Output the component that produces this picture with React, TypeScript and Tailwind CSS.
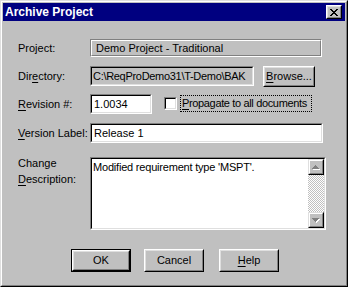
import { FC, ReactNode } from "react";

const raisedOuter =
  "border border-t-white border-l-white border-r-black border-b-black";
const raisedInner =
  "border border-t-[#dfdfdf] border-l-[#dfdfdf] border-r-[#808080] border-b-[#808080]";
const sunkenOuter =
  "border border-t-[#808080] border-l-[#808080] border-r-white border-b-white";
const sunkenInner =
  "border border-t-black border-l-black border-r-[#dfdfdf] border-b-[#dfdfdf]";

const Button: FC<{ children: ReactNode; isDefault?: boolean; className?: string }> = ({
  children,
  isDefault,
  className = "",
}) => {
  const body = (
    <div className={`${raisedOuter} h-full w-full bg-[#c0c0c0]`}>
      <div className={`${raisedInner} h-full w-full flex items-center justify-center`}>
        {children}
      </div>
    </div>
  );
  return isDefault ? (
    <div className={`border border-black ${className}`}>{body}</div>
  ) : (
    <div className={className}>{body}</div>
  );
};

const Sunken: FC<{ children?: ReactNode; className?: string; inner?: string }> = ({
  children,
  className = "",
  inner = "bg-white",
}) => (
  <div className={`${sunkenOuter} ${className}`}>
    <div className={`${sunkenInner} h-full w-full ${inner}`}>{children}</div>
  </div>
);

const Label: FC<{ children: ReactNode }> = ({ children }) => (
  <div className="w-[72px] shrink-0 h-[20px] leading-[20px] whitespace-nowrap">{children}</div>
);

const U: FC<{ children: ReactNode }> = ({ children }) => (
  <span className="underline underline-offset-[2px]">{children}</span>
);

const CloseGlyph = () => (
  <svg width="8" height="7" viewBox="0 0 8 7" shapeRendering="crispEdges" className="shrink-0">
    <path
      fill="#000"
      d="M0 0h2v1H0zM6 0h2v1H6zM1 1h2v1H1zM5 1h2v1H5zM2 2h4v1H2zM3 3h2v1H3zM2 4h4v1H2zM1 5h2v1H1zM5 5h2v1H5zM0 6h2v1H0zM6 6h2v1H6z"
    />
  </svg>
);

const ArrowGlyph: FC<{ down?: boolean }> = ({ down }) => (
  <svg width="8" height="5" viewBox="0 0 8 5" shapeRendering="crispEdges">
    {down ? (
      <>
        <path fill="#fff" d="M1 1h7v1H1zM2 2h5v1H2zM3 3h3v1H3zM4 4h1v1H4z" />
        <path fill="#808080" d="M0 0h7v1H0zM1 1h5v1H1zM2 2h3v1H2zM3 3h1v1H3z" />
      </>
    ) : (
      <>
        <path fill="#fff" d="M4 1h1v1H4zM3 2h3v1H3zM2 3h5v1H2zM1 4h7v1H1z" />
        <path fill="#808080" d="M3 0h1v1H3zM2 1h3v1H2zM1 2h5v1H1zM0 3h7v1H0z" />
      </>
    )}
  </svg>
);

const ScrollButton: FC<{ down?: boolean }> = ({ down }) => (
  <div className="w-[16px] h-[16px] border border-t-[#dfdfdf] border-l-[#dfdfdf] border-r-black border-b-black">
    <div className="h-full w-full border border-t-white border-l-white border-r-[#808080] border-b-[#808080] bg-[#c0c0c0] flex items-center justify-center">
      <ArrowGlyph down={down} />
    </div>
  </div>
);

const App: FC = () => {
  return (
    <div className="w-[348px] h-[287px] bg-[#c0c0c0] border border-t-[#dfdfdf] border-l-[#dfdfdf] border-r-black border-b-black font-['Liberation_Sans',Arial,sans-serif] text-[11px] text-black">
      <div className="h-full w-full border border-t-white border-l-white border-r-[#808080] border-b-[#808080] p-px flex flex-col">
        {/* title bar */}
        <div className="h-[18px] bg-[#000080] flex items-center justify-between pl-[2px] pr-[3px] shrink-0">
          <span className="text-white font-bold text-[12px] leading-none">Archive Project</span>
          <Button className="w-[16px] h-[14px]">
            <CloseGlyph />
          </Button>
        </div>

        <div className="pl-[15px] flex flex-col">
          {/* project */}
          <div className="flex mt-[18px] h-[18px] items-center">
            <Label>Project:</Label>
            <div className="w-[232px] h-[18px] border border-t-[#808080] border-l-[#808080] border-r-white border-b-white">
              <div className="h-full w-full border border-t-white border-l-white border-r-[#808080] border-b-[#808080] pl-[4px] leading-[14px]">
                Demo Project - Traditional
              </div>
            </div>
          </div>

          {/* directory */}
          <div className="flex mt-[9px] items-start">
            <Label>
              Dir<U>e</U>ctory:
            </Label>
            <Sunken className="w-[164px] h-[20px]" inner="bg-[#c0c0c0]">
              <div className="pl-[1px] leading-[16px] whitespace-nowrap overflow-hidden tracking-[-0.3px]">
                C:\ReqProDemo31\T-Demo\BAK
              </div>
            </Sunken>
            <Button className="ml-[9px] w-[52px] h-[21px]">
              <span>
                <U>B</U>rowse...
              </span>
            </Button>
          </div>

          {/* revision */}
          <div className="flex mt-[7px] items-start">
            <Label>
              <U>R</U>evision #:
            </Label>
            <Sunken className="w-[62px] h-[20px]">
              <div className="pl-[2px] leading-[16px]">1.0034</div>
            </Sunken>
            <div className="ml-[12px] mt-[3px] w-[13px] h-[13px]">
              <Sunken className="w-full h-full" />
            </div>
            <div className="ml-[3px] mt-[1px] w-[132px] h-[17px] border border-dotted border-black pl-[1px] leading-[15px] whitespace-nowrap tracking-[-0.35px]">
              <U>P</U>ropagate to all documents
            </div>
          </div>

          {/* version label */}
          <div className="flex mt-[9px] items-start">
            <Label>
              <U>V</U>ersion Label:
            </Label>
            <Sunken className="w-[233px] h-[20px]">
              <div className="pl-[2px] leading-[16px]">Release 1</div>
            </Sunken>
          </div>

          {/* change description */}
          <div className="flex mt-[14px] items-start">
            <div className="w-[72px] shrink-0 -mt-[2px] leading-[16px]">
              <div>Change</div>
              <div>
                <U>D</U>escription:
              </div>
            </div>
            <Sunken className="w-[236px] h-[73px]">
              <div className="flex h-full">
                <div className="flex-1 pl-[1px] pt-[1px] leading-[14px] tracking-[-0.2px]">
                  Modified requirement type 'MSPT'.
                </div>
                <div className="w-[16px] h-full flex flex-col">
                  <ScrollButton />
                  <div className="flex-1 bg-[repeating-conic-gradient(#c0c0c0_0_25%,#ffffff_0_50%)] bg-[length:2px_2px]" />
                  <ScrollButton down />
                </div>
              </div>
            </Sunken>
          </div>

          {/* buttons */}
          <div className="flex mt-[19px] pl-[53px]">
            <Button isDefault className="w-[60px] h-[23px]">
              OK
            </Button>
            <Button className="ml-[13px] w-[60px] h-[23px]">Cancel</Button>
            <Button className="ml-[15px] w-[60px] h-[23px]">
              <span>
                <U>H</U>elp
              </span>
            </Button>
          </div>
        </div>
      </div>
    </div>
  );
};

export default App;
